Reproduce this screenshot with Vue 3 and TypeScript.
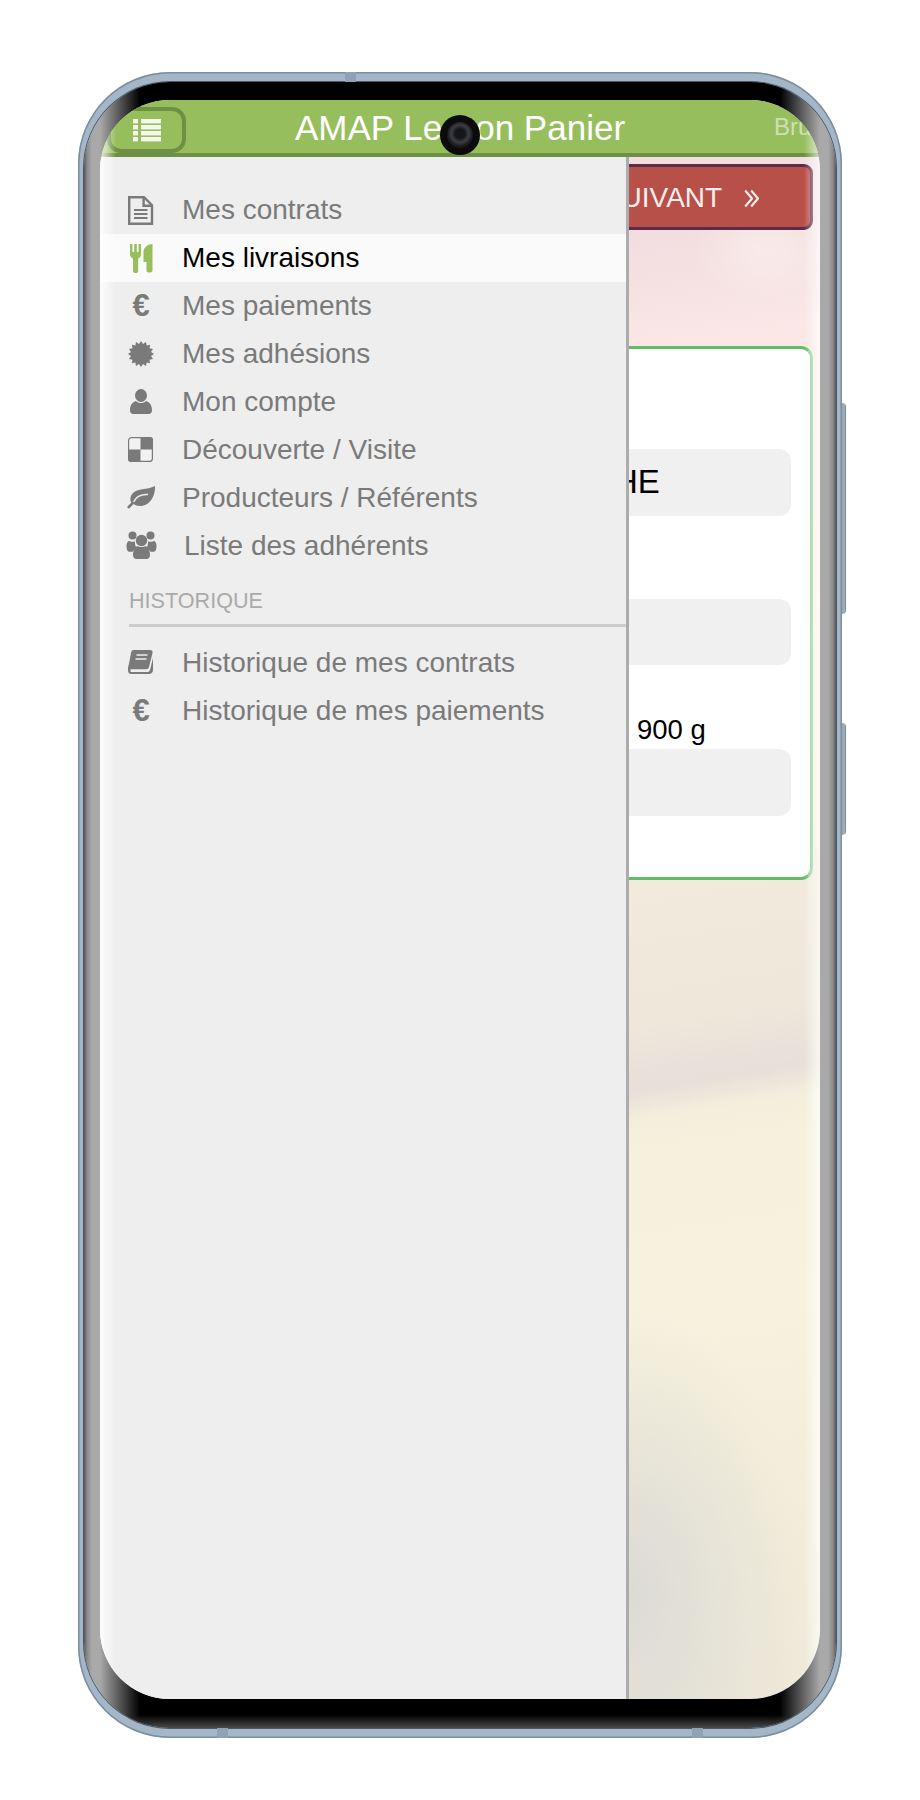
<script setup lang="ts">
const burst: string = Array.from({ length: 32 }, (_, i) => {
  const r = i % 2 === 0 ? 13 : 10.2
  const a = (i * Math.PI) / 16
  return `${(16 + r * Math.sin(a)).toFixed(2)},${(16 - r * Math.cos(a)).toFixed(2)}`
}).join(' ')
</script>

<template>
  <div class="page">
    <div class="phone">
      <span class="notch notch-top"></span>
      <span class="notch notch-bl"></span>
      <span class="notch notch-br"></span>
      <span class="side-btn side-btn-a"></span>
      <span class="side-btn side-btn-b"></span>
      <div class="bezel">
        <div class="screen">
          <header class="topbar">
            <button class="menu-btn" type="button" aria-label="Menu">
              <svg width="28" height="23" viewBox="0 0 28 23">
                <g fill="#f6f6ee">
                  <rect x="0" y="0" width="5" height="4.4" />
                  <rect x="8" y="0" width="20" height="4.4" />
                  <rect x="0" y="6" width="5" height="4.4" />
                  <rect x="8" y="6" width="20" height="4.4" />
                  <rect x="0" y="12" width="5" height="4.4" />
                  <rect x="8" y="12" width="20" height="4.4" />
                  <rect x="0" y="18" width="5" height="4.4" />
                  <rect x="8" y="18" width="20" height="4.4" />
                </g>
              </svg>
            </button>
            <h1 class="title">AMAP Le Bon Panier</h1>
            <span class="user">Bru</span>
          </header>

          <main class="content">
            <button class="next-btn" type="button">
              <span>SUIVANT</span>
              <svg width="15" height="19" viewBox="0 0 15 19" fill="none" stroke="#f4ecea" stroke-width="2.2">
                <path d="M1.2 1.5 8 9.5 1.2 17.5" />
                <path d="M7.2 1.5 14 9.5 7.2 17.5" />
              </svg>
            </button>
            <section class="card">
              <div class="field field-big"><span>HE</span></div>
              <div class="field field-two"></div>
              <p class="weight">900 g</p>
              <div class="field"></div>
            </section>
          </main>

          <nav class="drawer">
            <a class="row">
              <svg class="ico" viewBox="0 0 32 32" fill="none" stroke="#7a7a7a" stroke-width="2.4">
                <path d="M4.2 3.2H19l8 8v18.6H4.2z" />
                <path d="M18.6 3.2v8.6h8.6" />
                <path d="M9 16h13.5M9 20h13.5M9 24h13.5" stroke-width="2" />
              </svg>
              <span>Mes contrats</span>
            </a>
            <a class="row active">
              <svg class="ico" viewBox="0 0 32 32" fill="#97c05c">
                <path d="M5 2h2.400v8h1.800V2h2.600v8h1.800V2H16v10c0 2.500-1.500 4-2.800 4.500V28.500a2.600 2.600 0 0 1-5.200 0V16.500C6.500 16 5 14.500 5 12z" />
                <path d="M27.500 2v26.500a2 2 0 0 1-2 2h-2a2 2 0 0 1-2-2V20h-3V10c0-4.500 4.500-8 9-8z" />
              </svg>
              <span>Mes livraisons</span>
            </a>
            <a class="row">
              <i class="ico euro">€</i>
              <span>Mes paiements</span>
            </a>
            <a class="row">
              <svg class="ico" viewBox="0 0 32 32" fill="#7a7a7a"><polygon :points="burst" /></svg>
              <span>Mes adhésions</span>
            </a>
            <a class="row">
              <svg class="ico" viewBox="0 0 32 32" fill="#7a7a7a">
                <ellipse cx="16" cy="9.500" rx="6" ry="6.500" />
                <path d="M5 24.500c0-5.500 2.500-8.500 6-9.500 1.500 1.500 3 2 5 2s3.500-.5 5-2c3.500 1 6 4 6 9.500 0 2-1.500 3.500-3 3.500H8c-1.500 0-3-1.500-3-3.500z" />
              </svg>
              <span>Mon compte</span>
            </a>
            <a class="row">
              <svg class="ico" viewBox="0 0 32 32">
                <rect x="3.600" y="3.600" width="23.800" height="23.800" rx="3" fill="#f2f2f2" stroke="#7a7a7a" stroke-width="1.200" />
                <path fill="#7a7a7a" d="M15.500 3H25a3 3 0 0 1 3 3v9.500H15.500zM3 15.500h12.500V28H6a3 3 0 0 1-3-3z" />
              </svg>
              <span>Découverte / Visite</span>
            </a>
            <a class="row">
              <svg class="ico" viewBox="0 0 32 32">
                <path fill="#7a7a7a" d="M30 4c.5 10-5 20-15 20-2.800 0-5-.8-6.500-2L5 25.800c-.9.9-2.100.7-2.500 0-.4-.8 0-1.400.7-2.100l3-3C4.800 18 5 14.500 7.500 11.500 12.500 5.500 22 8.500 30 4z" />
                <path fill="none" stroke="#eee" stroke-width="1.500" d="M8.500 20c2.500-5 8-8 14.500-7.500" />
              </svg>
              <span>Producteurs / Référents</span>
            </a>
            <a class="row row-wide">
              <svg class="ico" viewBox="0 0 32 32" fill="#7a7a7a">
                <circle cx="7.500" cy="5.500" r="4" />
                <circle cx="25.500" cy="5.500" r="4" />
                <path d="M1.500 16c0-3 1-5 3-5 1.500 1 4 1.200 5.500.3-.3 3 .5 5.500 2 7-2 1-3.500 2-4.500 3.500H4C2.500 21.500 1.500 19 1.500 16z" />
                <path d="M31.500 16c0-3-1-5-3-5-1.500 1-4 1.200-5.500.3.300 3-.5 5.500-2 7 2 1 3.500 2 4.500 3.500H29c1.500 0 2.500-2.500 2.500-5.500z" />
                <path d="M8 25c0-5 2-8 4.500-9 2 1.300 6 1.300 8 0 2.500 1 4.500 4 4.500 9 0 2.500-1.500 4-3.500 4h-10C9.500 29 8 27.500 8 25z" />
                <circle cx="16.500" cy="10.500" r="5.700" />
              </svg>
              <span>Liste des adhérents</span>
            </a>

            <div class="section-title">HISTORIQUE</div>

            <a class="row">
              <svg class="ico" viewBox="0 0 32 32">
                <path fill="#7a7a7a" d="M8.500 3H25c1.800 0 3 1.300 2.500 3L24 20c-.4 1.500-1.500 2.200-3 2.200H6.500c-1.500 0-1.500 2.800 0 2.800h16c1.400 0 2.100-.8 2.500-2L28 11v12c0 2.500-2 4-4 4H6c-2 0-3-1.500-3-4s0-3 .8-5.500L6 6c.4-1.800 1-3 2.500-3z" />
                <path fill="none" stroke="#eee" stroke-width="1.500" d="M11.500 8h11M10.500 12h11" />
              </svg>
              <span>Historique de mes contrats</span>
            </a>
            <a class="row">
              <i class="ico euro">€</i>
              <span>Historique de mes paiements</span>
            </a>
          </nav>

          <div class="edge-glow"></div>
          <div class="camera"><span class="lens"></span></div>
        </div>
      </div>
    </div>
  </div>
</template>

<style>
html, body { margin: 0; background: #fff; }
</style>

<style scoped>
.page {
  width: 920px;
  height: 1800px;
  box-sizing: border-box;
  padding: 72px 78px 62px;
  background: #fff;
  font-family: "Liberation Sans", Arial, sans-serif;
}
.phone {
  position: relative;
  height: 100%;
  box-sizing: border-box;
  padding: 10px 6px;
  border-radius: 92px;
  background: #a4b7c8;
  box-shadow: inset 0 0 0 1.5px #7c8d9c;
}
.notch { position: absolute; background: #8fa3b6; }
.notch-top { top: 0; left: 267px; width: 11px; height: 10px; }
.notch-bl { bottom: 0; left: 139px; width: 11px; height: 10px; }
.notch-br { bottom: 0; left: 614px; width: 11px; height: 10px; }
.side-btn {
  position: absolute;
  right: -4px;
  width: 4px;
  border-radius: 0 4px 4px 0;
  background: linear-gradient(to right, #93a5b5, #a2b0bc 60%, #6d7d8b);
}
.side-btn-a { top: 331px; height: 211px; }
.side-btn-b { top: 651px; height: 112px; }
.bezel {
  height: 100%;
  box-sizing: border-box;
  padding: 18px 16px 29px;
  border-radius: 86px;
  box-shadow: 0 0 0 1px #4a5864;
  background:
    linear-gradient(to top, #4a4a4a 0, #333 4px, rgba(0, 0, 0, 0) 13px),
    linear-gradient(to right, #555 0, #8a8a8a 3px, #a9a9a9 8px, #a9a9a9 16px, #000 56px, #000 calc(100% - 56px), #a9a9a9 calc(100% - 16px), #a9a9a9 calc(100% - 8px), #8a8a8a calc(100% - 3px), #555 100%);
}
.screen {
  position: relative;
  height: 100%;
  overflow: hidden;
  border-radius: 70px;
  display: flex;
  flex-direction: column;
  background:
    radial-gradient(70px 50px at 665px 150px, rgba(255, 245, 242, 0.5), rgba(255, 245, 242, 0)),
    radial-gradient(170px 280px at 530px 1490px, rgba(214, 214, 212, 0.8), rgba(214, 214, 212, 0)),
    linear-gradient(171deg, #f2dee0 224px, #fae7e6 338px, #fbf0e8 600px, #f1eadc 886px, #eee7da 1000px, #e7dfd9 1062px, #f3efdc 1092px, #f5f1dc 1125px, #f7f2de 1300px, #f2edda 1500px, #ede8d8 1692px);
}
.topbar {
  flex: none;
  box-sizing: border-box;
  height: 57px;
  padding: 7px 7px 0;
  display: grid;
  grid-template-columns: minmax(0, 1fr) auto minmax(0, 1fr);
  background: #97be5c;
  border-bottom: 4px solid #6e9045;
  overflow: hidden;
}
.menu-btn {
  justify-self: start;
  box-sizing: border-box;
  width: 79px;
  height: 46px;
  display: flex;
  align-items: center;
  justify-content: center;
  padding: 0;
  background: #97be5c;
  border: 4px solid #6e9045;
  border-radius: 14px;
}
.title {
  margin: -4px 0 0;
  font-size: 35px;
  font-weight: 400;
  line-height: 50px;
  color: #fff;
  white-space: nowrap;
}
.user {
  justify-self: start;
  margin: 5px 0 0 149px;
  font-size: 24px;
  line-height: 30px;
  color: rgba(255, 255, 255, 0.55);
  white-space: nowrap;
}
.content {
  flex: 1;
  box-sizing: border-box;
  padding: 7px 7px 0;
  display: flex;
  flex-direction: column;
}
.next-btn {
  align-self: flex-end;
  box-sizing: border-box;
  width: 264px;
  height: 66px;
  display: flex;
  align-items: center;
  justify-content: center;
  gap: 22px;
  padding: 2px 0 0;
  background: #b8504a;
  border: 3px solid #5e2a46;
  border-radius: 9px;
  color: #f6eeec;
  font-family: inherit;
  font-size: 28px;
}
.card {
  margin-top: 116px;
  height: 534px;
  box-sizing: border-box;
  padding: 100px 19px 0;
  background: #fff;
  border: 3px solid #62bc66;
  border-right-color: #8dd190;
  border-radius: 12px;
}
.field {
  height: 66.500px;
  display: flex;
  align-items: center;
  background: #f0f0f0;
  border-radius: 12px;
}
.field-big {
  padding-left: 485px;
  font-size: 33px;
  color: #000;
}
.field-two { margin-top: 83px; }
.weight {
  margin: 48px 0 3px;
  height: 33px;
  padding-left: 508px;
  font-size: 27.500px;
  line-height: 33px;
  color: #000;
}
.drawer {
  position: absolute;
  top: 57px;
  bottom: 0;
  left: 0;
  width: 529px;
  box-sizing: border-box;
  padding-top: 29px;
  background: #eee;
  border-right: 3px solid #acacac;
}
.row {
  height: 48px;
  padding-left: 25px;
  display: flex;
  align-items: center;
  gap: 25px;
  font-size: 28px;
  color: #7a7a7a;
  white-space: nowrap;
}
.row.active { background: #fafafa; color: #000; }
.row-wide { gap: 27px; }
.ico {
  flex: none;
  display: block;
  width: 32px;
  height: 32px;
}
.euro {
  font-style: normal;
  font-weight: 700;
  font-size: 31px;
  line-height: 32px;
  text-align: center;
  color: #7a7a7a;
}
.section-title {
  margin: 18px 0 12px 29px;
  height: 36px;
  font-size: 21.600px;
  line-height: 25px;
  color: #aaa;
  border-bottom: 3px solid #ccc;
}
.edge-glow {
  position: absolute;
  inset: 0;
  pointer-events: none;
  background:
    linear-gradient(to right, rgba(255, 255, 255, 0.85) 0, rgba(255, 255, 255, 0) 16px),
    linear-gradient(to left, rgba(255, 255, 255, 0.7) 0, rgba(255, 255, 255, 0) 16px);
}
.camera {
  position: absolute;
  top: 15px;
  left: 340px;
  width: 40px;
  height: 40px;
  display: flex;
  align-items: center;
  justify-content: center;
  border-radius: 50%;
  background: #0b0b0b;
}
.lens {
  width: 26px;
  height: 26px;
  border-radius: 50%;
  background: radial-gradient(circle at 50% 45%, #15161a 0, #15161a 25%, #3c3d45 45%, #1a1a1d 65%, #0b0b0b 100%);
}
</style>
